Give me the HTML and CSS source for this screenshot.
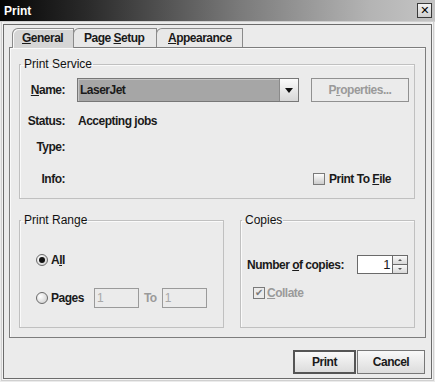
FILE: index.html
```html
<!DOCTYPE html>
<html lang="en">
<head>
<meta charset="utf-8">
<title>Print</title>
<link rel="stylesheet" href="styles.css">
</head>
<body>
<div class="window">
    <div class="titlebar">
        <span class="title">Print</span>
        <span class="close">&#x2715;</span>
    </div>
    <div class="frame">
        <div class="tabs">
            <div class="tab selected"><u>G</u>eneral</div>
            <div class="tab">Page <u>S</u>etup</div>
            <div class="tab"><u>A</u>ppearance</div>
        </div>
        <div class="panel">
            <fieldset class="group service">
                <legend>Print Service</legend>
                <div class="grid">
                    <span class="label"><u>N</u>ame:</span>
                    <div class="service-row">
                        <div class="combo">
                            <span class="combo-value">LaserJet</span>
                            <span class="combo-arrow"></span>
                        </div>
                        <div class="button disabled"><span>P<u>r</u>operties...</span></div>
                    </div>
                    <span class="label">Status:</span>
                    <span class="value">Accepting jobs</span>
                    <span class="label">Type:</span>
                    <span class="value"></span>
                    <span class="label last">Info:</span>
                    <div class="info-row last">
                        <label class="check"><span class="box"></span><span>Print To <u>F</u>ile</span></label>
                    </div>
                </div>
            </fieldset>
            <div class="lower">
                <fieldset class="group range">
                    <legend>Print Range</legend>
                    <div class="range-body">
                        <div class="radio-line"><span class="radio on"></span><span>A<u>l</u>l</span></div>
                        <div class="radio-line pages">
                            <span class="radio"></span>
                            <span>Pa<u>g</u>es</span>
                            <span class="field">1</span>
                            <span class="to">To</span>
                            <span class="field">1</span>
                        </div>
                    </div>
                </fieldset>
                <fieldset class="group copies">
                    <legend>Copies</legend>
                    <div class="copies-body">
                        <div class="copies-line">
                            <span>Number <u>o</u>f copies:</span>
                            <div class="spinner">
                                <span class="spin-field">1</span>
                                <div class="spin-buttons">
                                    <span class="spin up"></span>
                                    <span class="spin down"></span>
                                </div>
                            </div>
                        </div>
                        <label class="check disabled"><span class="box checked">&#x2714;</span><span><u>C</u>ollate</span></label>
                    </div>
                </fieldset>
            </div>
        </div>
        <div class="actions">
            <div class="button default">Print</div>
            <div class="button">Cancel</div>
        </div>
    </div>
</div>
</body>
</html>
```

FILE: styles.css
```css
body {
    margin: 0;
    font-family: "Liberation Sans", Arial, sans-serif;
    font-size: 12px;
    letter-spacing: -0.5px;
    font-weight: bold;
    color: #1a1a1a;
    background: #e9e9e9;
}
u {
    text-decoration: underline;
    text-underline-offset: 1px;
}
.window {
    width: 435px;
    height: 382px;
    display: flex;
    flex-direction: column;
    box-sizing: border-box;
    background: #ebebeb;
    white-space: nowrap;
}
.titlebar {
    height: 21px;
    display: flex;
    align-items: center;
    justify-content: space-between;
    padding: 0 3px 0 4px;
    background: linear-gradient(to right, #050505, #2a2a2a 20%, #7a7a7a 55%, #b4b4b4 85%, #c4c4c4);
    border-bottom: 1px solid #cfcfcf;
}
.title {
    color: #fff;
    letter-spacing: 0;
}
.close {
    width: 13px;
    height: 13px;
    border: 1px solid #3a3a3a;
    background: linear-gradient(#f4f4f4, #cfcfcf);
    color: #000;
    font-family: "DejaVu Sans", sans-serif;
    font-size: 11px;
    line-height: 13px;
    text-align: center;
}
.frame {
    flex: 1;
    display: flex;
    flex-direction: column;
    border: 1px solid #d0d0d0;
    border-top: none;
    outline: 1px solid #6b6b6b;
    outline-offset: -3px;
    padding: 6px 7px 0 7px;
    margin: 0 1px 1px 1px;
    box-shadow: inset 2px 0 #f4f4f4, inset -2px 0 #f4f4f4, inset 0 -2px #f4f4f4;
}
.tabs {
    display: flex;
    padding-left: 3px;
    height: 20px;
    position: relative;
    z-index: 1;
}
.tab {
    height: 19px;
    box-sizing: border-box;
    padding: 1px 0 0 10px;
    margin-right: -1px;
    border: 1px solid #8a8a8a;
    border-bottom: none;
    border-top-left-radius: 6px 6px;
    line-height: 16px;
    background: #e8e8e8;
    color: #1a1a1a;
}
.tab:first-child {
    width: 62px;
    padding-left: 9px;
}
.tab:nth-child(2) {
    width: 84px;
}
.tab:nth-child(3) {
    width: 87px;
    padding-left: 11px;
}
.tab.selected {
    height: 20px;
    background: #d6d6d6;
    box-shadow: inset 1px 1px #f8f8f8;
}
.panel {
    height: 291px;
    box-sizing: border-box;
    border: 1px solid #7d7d7d;
    box-shadow: inset 1px 1px #fafafa;
    padding: 9px 10px 9px 9px;
    display: flex;
    flex-direction: column;
    gap: 14px;
    margin-top: -1px;
}
.group {
    margin: 0;
    padding: 0;
    min-width: 0;
    border: 1px solid #c0c0c0;
    box-shadow: inset 1px 1px #fafafa;
}
legend {
    padding: 0 1px 0 3px;
    margin-left: 1px;
    font-weight: normal;
    letter-spacing: 0;
    line-height: 14px;
    color: #111;
}
.service {
    height: 142px;
    box-sizing: border-box;
}
.grid {
    display: grid;
    grid-template-columns: 45px 1fr;
    grid-template-rows: 24px 14px 14px 20px;
    row-gap: 12px;
    column-gap: 12px;
    align-items: center;
    padding: 7px 7px 0 0;
}
.grid .label {
    text-align: right;
}
.grid .last {
    align-self: end;
}
.service-row {
    display: flex;
    gap: 12px;
}
.combo {
    width: 222px;
    height: 24px;
    box-sizing: border-box;
    border: 1px solid #777;
    display: flex;
    background: #a6a6a6;
}
.combo-value {
    flex: 1;
    padding-left: 2px;
    line-height: 22px;
    box-shadow: inset 1px 1px #c4c4c4;
}
.combo-arrow {
    width: 18px;
    border-left: 1px solid #8a8a8a;
    background: linear-gradient(#fbfbfb, #d7d7d7);
    display: flex;
    align-items: center;
    justify-content: center;
}
.combo-arrow::after {
    content: "";
    border-left: 4px solid transparent;
    border-right: 4px solid transparent;
    border-top: 5px solid #111;
}
.button {
    height: 24px;
    box-sizing: border-box;
    border: 1px solid #777;
    background: linear-gradient(#f9f9f9, #dcdcdc);
    display: flex;
    align-items: center;
    justify-content: center;
    color: #1a1a1a;
}
.button.disabled {
    width: 98px;
    color: #9a9a9a;
    background: #ebebeb;
    border-color: #909090;
}
.value {
    margin-left: 1px;
}
.info-row {
    display: flex;
    justify-content: flex-end;
    padding-right: 18px;
}
.check {
    display: flex;
    align-items: center;
    gap: 4px;
    height: 14px;
}
.box {
    width: 12px;
    height: 12px;
    box-sizing: border-box;
    border: 1px solid #7a7a7a;
    background: linear-gradient(#fdfdfd, #cccccc);
    font-family: "DejaVu Sans", sans-serif;
    font-size: 10px;
    line-height: 10px;
    text-align: center;
    color: #7a7a7a;
}
.box.checked {
    background: #ebebeb;
}
.check.disabled {
    color: #9a9a9a;
}
.lower {
    display: flex;
    gap: 16px;
    flex: 1;
}
.range {
    width: 205px;
    box-sizing: border-box;
}
.range-body {
    padding: 26px 0 0 16px;
}
.copies {
    flex: 1;
}
.copies-body {
    padding: 28px 0 0 6px;
}
.radio-line {
    display: flex;
    align-items: center;
    gap: 3px;
    height: 14px;
}
.radio-line.pages {
    margin-top: 21px;
    height: 20px;
}
.radio {
    width: 12px;
    height: 12px;
    box-sizing: border-box;
    border: 1px solid #6a6a6a;
    border-radius: 50%;
    background: radial-gradient(circle at 35% 35%, #ffffff, #c8c8c8);
    display: flex;
    align-items: center;
    justify-content: center;
}
.radio.on::after {
    content: "";
    width: 6px;
    height: 6px;
    border-radius: 50%;
    background: #111;
}
.field {
    width: 45px;
    height: 20px;
    box-sizing: border-box;
    border: 1px solid #9a9a9a;
    background: #ebebeb;
    color: #a8a8a8;
    font-weight: normal;
    line-height: 18px;
    padding-left: 2px;
    margin-left: 7px;
}
.to {
    margin-left: 2px;
    color: #9a9a9a;
}
.to + .field {
    margin-left: 2px;
}
.copies-line {
    display: flex;
    align-items: center;
    gap: 13px;
}
.spinner {
    display: flex;
    height: 19px;
}
.spin-field {
    width: 35px;
    box-sizing: border-box;
    border: 1px solid #6a6a6a;
    border-right: none;
    background: #fff;
    text-align: right;
    padding-right: 2px;
    line-height: 17px;
    font-weight: normal;
    font-size: 13px;
}
.spin-buttons {
    display: flex;
    flex-direction: column;
    width: 16px;
    border: 1px solid #6a6a6a;
    box-sizing: border-box;
}
.spin {
    flex: 1;
    background: linear-gradient(#f9f9f9, #d8d8d8);
    display: flex;
    align-items: center;
    justify-content: center;
}
.spin.up {
    border-bottom: 1px solid #6a6a6a;
}
.spin.up::after {
    content: "";
    border-left: 2px solid transparent;
    border-right: 2px solid transparent;
    border-bottom: 2px solid #555;
}
.spin.down::after {
    content: "";
    border-left: 2px solid transparent;
    border-right: 2px solid transparent;
    border-top: 2px solid #555;
}
.copies .check {
    margin: 12px 0 0 6px;
    gap: 2px;
}
.actions {
    display: flex;
    justify-content: flex-end;
    gap: 1px;
    padding: 12px 1px 0 0;
}
.actions .button {
    height: 24px;
    width: 68px;
}
.actions .button.default {
    width: 63px;
    border: 2px solid #555;
}
```
